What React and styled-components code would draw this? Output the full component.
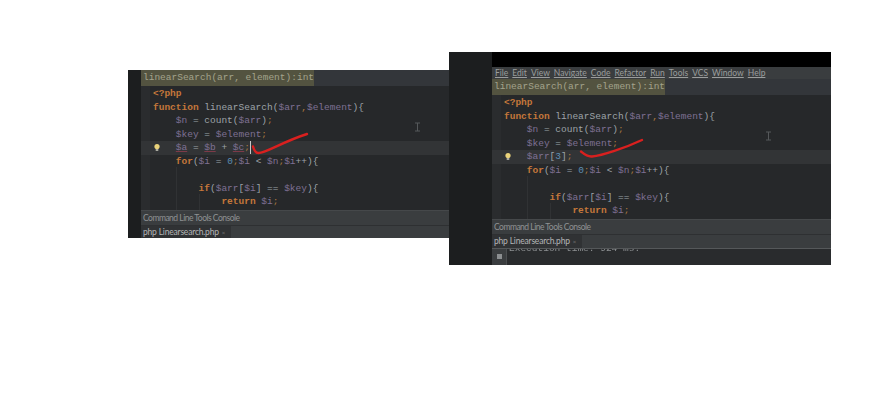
import React from "react";
import styled, { createGlobalStyle } from "styled-components";

const GlobalStyle = createGlobalStyle`
  html, body { margin: 0; padding: 0; background: #fff; }
  body { width: 880px; height: 409px; overflow: hidden; }
`;

const Canvas = styled.div`
  position: relative;
  width: 880px;
  height: 409px;
  background: #fff;
`;

const Shot = styled.div`
  position: absolute;
  left: ${(p) => p.$left}px;
  top: ${(p) => p.$top}px;
  width: ${(p) => p.$width}px;
  height: ${(p) => p.$height}px;
  display: flex;
  overflow: hidden;
  background: #1b1d1e;
`;

const Side = styled.div`
  flex: 0 0 ${(p) => p.$width}px;
  background: #1c1e1f;
`;

const Main = styled.div`
  flex: 1;
  min-width: 0;
  display: flex;
  flex-direction: column;
  background: #292b2d;
`;

const TopBlack = styled.div`
  flex: 0 0 15px;
  background: #000;
`;

const MenuBar = styled.div`
  flex: 0 0 12px;
  display: flex;
  align-items: center;
  gap: 4px;
  padding-left: 3px;
  background: #3a3d3f;
  color: #9b9d9d;
  font: 8.5px/12px Lato, "Liberation Sans", sans-serif;
  span { text-decoration: underline; text-decoration-thickness: 0.5px; text-underline-offset: 1px; }
`;

const SigRow = styled.div`
  flex: 0 0 16px;
  display: flex;
  background: #33363a;
`;

const Signature = styled.div`
  padding: 0 0 0 2px;
  background: #535340;
  color: #a3a38c;
  font: 9.5px/16px "Liberation Mono", monospace;
  white-space: pre;
`;

const Code = styled.div`
  position: relative;
  flex: 0 0 ${(p) => p.$height}px;
  padding-top: 1px;
  padding-left: 12px;
  box-sizing: border-box;
  background: #26282a;
  overflow: hidden;
`;

const Gutter = styled.div`
  position: absolute;
  left: 0;
  top: 0;
  bottom: 0;
  width: 9px;
  background: #2a2c2e;
`;

const Line = styled.div`
  position: relative;
  height: 13.5px;
  margin-left: -12px;
  padding-left: ${(p) => 12 + (p.$indent || 0) * 11.4}px;
  background: ${(p) => (p.$active ? "#323436" : "transparent")};
  color: #9da3a8;
  font: 9.5px/13.5px "Liberation Mono", monospace;
  white-space: pre;
`;

const Kw = styled.span`
  color: #c4773a;
  font-weight: bold;
`;

const Var = styled.span`
  color: #7f7194;
  text-decoration: ${(p) => (p.$warn ? "underline #7d3a48" : "none")};
`;

const Punct = styled.span`
  color: #a9793f;
`;

const Num = styled.span`
  color: #5f8fb5;
`;

const Caret = styled.span`
  display: inline-block;
  width: 1px;
  height: 13px;
  vertical-align: top;
  background: #c8c8c8;
`;

const Bulb = styled.svg`
  position: absolute;
  left: 12px;
  top: 2px;
`;

const Guide = styled.div`
  position: absolute;
  left: ${(p) => p.$left}px;
  top: ${(p) => p.$top}px;
  height: ${(p) => p.$height}px;
  width: 1px;
  background: #303234;
`;

const ToolBar = styled.div`
  flex: 0 0 15px;
  padding-left: 2px;
  background: #3a3d3f;
  border-top: 1px solid #45484a;
  box-sizing: border-box;
  color: #8f9293;
  font: 8.5px/14px Lato, "Liberation Sans", sans-serif;
  letter-spacing: -0.5px;
`;

const TabRow = styled.div`
  flex: 0 0 ${(p) => p.$height}px;
  display: flex;
  background: #3a3d3f;
  border-top: 1px solid #2e3032;
  box-sizing: border-box;
  overflow: hidden;
`;

const Tab = styled.div`
  padding: 0 6px 0 2px;
  background: #303234;
  color: #b4b6b7;
  font: 8.5px/13px Lato, "Liberation Sans", sans-serif;
  letter-spacing: -0.2px;
  small { font-size: 6px; color: #777; margin-left: 3px; }
`;

const Console = styled.div`
  flex: 1;
  min-height: 0;
  display: flex;
  background: #292b2d;
  border-top: 1px solid #55585a;
  overflow: hidden;
`;

const ConsoleTools = styled.div`
  flex: 0 0 14px;
  display: flex;
  justify-content: center;
  padding-top: 5px;
  background: #3a3d3f;
  border-right: 1px solid #4a4d4f;
`;

const StopButton = styled.div`
  width: 5px;
  height: 5px;
  background: #8b8e90;
`;

const ConsoleText = styled.div`
  margin-top: -6px;
  padding-left: 2px;
  color: #8e9193;
  font: 9.5px/11px "Liberation Mono", monospace;
  white-space: pre;
`;

const Overlay = styled.svg`
  position: absolute;
  left: 0;
  top: 0;
  pointer-events: none;
`;

const Scene = styled.div`
  position: absolute;
  inset: 0;
  filter: blur(0.55px);
`;

const bulb = (
  <Bulb width="8" height="10" viewBox="0 0 8 10">
    <circle cx="4" cy="3.5" r="2.6" fill="#e9d27a" />
    <rect x="2.7" y="6" width="2.6" height="2" fill="#a9a9a0" />
  </Bulb>
);

function CodeLines({ active }) {
  return (
    <>
      <Line><Kw>{"<?php"}</Kw></Line>
      <Line>
        <Kw>function</Kw> linearSearch(<Var>$arr</Var><Punct>,</Punct><Var>$element</Var>){"{"}
      </Line>
      <Line $indent={2}>
        <Var>$n</Var> = count(<Var>$arr</Var>)<Punct>;</Punct>
      </Line>
      <Line $indent={2}>
        <Var>$key</Var> = <Var>$element</Var><Punct>;</Punct>
      </Line>
      <Line $indent={2} $active>
        {bulb}
        {active}
      </Line>
      <Line $indent={2}>
        <Kw>for</Kw>(<Var>$i</Var> = <Num>0</Num><Punct>;</Punct><Var>$i</Var> {"<"} <Var>$n</Var><Punct>;</Punct><Var>$i</Var>++){"{"}
      </Line>
      <Line />
      <Line $indent={4}>
        <Kw>if</Kw>(<Var>$arr</Var>[<Var>$i</Var>] == <Var>$key</Var>){"{"}
      </Line>
      <Line $indent={6}>
        <Kw>return</Kw> <Var>$i</Var><Punct>;</Punct>
      </Line>
      <Guide $left={35} $top={81} $height={45} />
      <Guide $left={58} $top={108} $height={18} />
    </>
  );
}

export default function App() {
  return (
    <Canvas>
      <GlobalStyle />
      <Scene>
        <Shot $left={128} $top={70} $width={322} $height={168}>
          <Side $width={13} />
          <Main>
            <SigRow><Signature>linearSearch(arr, element):int</Signature></SigRow>
            <Code $height={124}>
              <Gutter />
              <CodeLines
                active={
                  <>
                    <Var $warn>$a</Var> = <Var $warn>$b</Var> + <Var $warn>$c</Var><Punct>;</Punct><Caret />
                  </>
                }
              />
            </Code>
            <ToolBar>Command Line Tools Console</ToolBar>
            <TabRow $height={13}><Tab>php Linearsearch.php<small>×</small></Tab></TabRow>
          </Main>
        </Shot>

        <Shot $left={449} $top={52} $width={382} $height={213}>
          <Side $width={43} />
          <Main>
            <TopBlack />
            <MenuBar>
              <span>File</span><span>Edit</span><span>View</span><span>Navigate</span><span>Code</span>
              <span>Refactor</span><span>Run</span><span>Tools</span><span>VCS</span><span>Window</span><span>Help</span>
            </MenuBar>
            <SigRow><Signature>linearSearch(arr, element):int</Signature></SigRow>
            <Code $height={124}>
              <Gutter />
              <CodeLines
                active={
                  <>
                    <Var>$arr</Var>[<Num>3</Num>]<Punct>;</Punct>
                  </>
                }
              />
            </Code>
            <ToolBar>Command Line Tools Console</ToolBar>
            <TabRow $height={14}><Tab>php Linearsearch.php<small>×</small></Tab></TabRow>
            <Console>
              <ConsoleTools><StopButton /></ConsoleTools>
              <ConsoleText>Execution time: 924 ms.</ConsoleText>
            </Console>
          </Main>
        </Shot>

        <Overlay width="880" height="409" viewBox="0 0 880 409" fill="none">
          <path d="M415 123h5M417.5 123v8M415 131h5" stroke="#55585a" />
          <path d="M766 132h5M768.500 132v8M766 140h5" stroke="#55585a" />
          <path
            d="M253 146.500C254 150 255.500 153 258.500 153C266 153 282 142 307 134"
            stroke="#d9201f"
            strokeWidth="2.4"
            strokeLinecap="round"
          />
          <path
            d="M581 151.500C584 154 587 157 592 156.500C602 155.500 625 148 642 140"
            stroke="#d9201f"
            strokeWidth="2.4"
            strokeLinecap="round"
          />
        </Overlay>
      </Scene>
    </Canvas>
  );
}
